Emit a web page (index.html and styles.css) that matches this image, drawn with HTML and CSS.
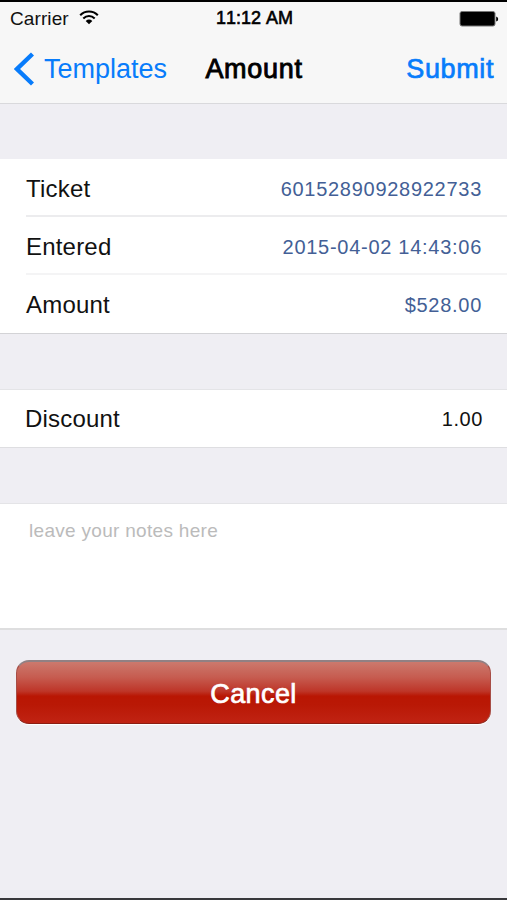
FILE: index.html
```html
<!DOCTYPE html>
<html lang="en">
<head>
    <meta charset="UTF-8">
    <meta name="viewport" content="width=device-width, initial-scale=1.0">
    <title>Amount</title>
    <link rel="stylesheet" href="styles.css">
</head>
<body>
    <div class="header">
        <div class="status-bar">
            <div class="carrier">
                <span>Carrier</span>
                <svg class="wifi" width="20" height="15" viewBox="0 0 20 15">
                    <path d="M1.2 5.2 C6 .3 14 .3 18.8 5.2" fill="none" stroke="#000" stroke-width="2.1"/>
                    <path d="M4.3 8.4 C7.6 5.2 12.4 5.2 15.7 8.4" fill="none" stroke="#000" stroke-width="2.1"/>
                    <path d="M6.7 10.9 Q10 8.2 13.3 10.9 L10 14.3 Z" fill="#000"/>
                </svg>
            </div>
            <div class="clock">11:12 AM</div>
            <svg class="battery" width="40" height="16" viewBox="0 0 40 16">
                <rect x="1" y=".5" width="35" height="14.5" rx="2" fill="#000" stroke="#777"/>
                <path d="M37.2 5.5 Q39.2 6 39.2 8 T37.2 10.5 Z" fill="#000"/>
            </svg>
        </div>
        <div class="nav-bar">
            <a class="back">
                <svg width="20" height="34" viewBox="0 0 20 34">
                    <path d="M18.5 2 L3 17 L18.5 32" fill="none" stroke="#087cfb" stroke-width="4.4"/>
                </svg>
                <span>Templates</span>
            </a>
            <h1>Amount</h1>
            <a class="submit">Submit</a>
        </div>
    </div>

    <div class="group details">
        <div class="row">
            <span>Ticket</span>
            <span class="value">60152890928922733</span>
        </div>
        <div class="row">
            <span>Entered</span>
            <span class="value">2015-04-02 14:43:06</span>
        </div>
        <div class="row">
            <span>Amount</span>
            <span class="value">$528.00</span>
        </div>
    </div>

    <div class="group discount">
        <span>Discount</span>
        <span class="discount-value">1.00</span>
    </div>

    <div class="group notes">leave your notes here</div>

    <button class="cancel-button">Cancel</button>
</body>
</html>
```
FILE: styles.css
```css
* {
    box-sizing: border-box;
}

body {
    font-family: "Liberation Sans", Arial, sans-serif;
    margin: 0;
    height: 900px;
    overflow: hidden;
    background-color: #efeef3;
    color: #111;
    border-top: 2px solid #000;
    border-bottom: 2px solid #38383b;
}

.header {
    height: 102px;
    background-color: #f7f7f7;
    border-bottom: 1px solid #d9d9dc;
}

.status-bar {
    display: grid;
    grid-template-columns: 1fr auto 1fr;
    align-items: center;
    height: 33px;
    padding: 0 8px 0 10px;
}

.carrier {
    display: flex;
    align-items: center;
    gap: 10px;
    font-size: 19px;
    letter-spacing: 0.1px;
}

.wifi {
    margin-top: -3px;
}

.clock {
    font-size: 18px;
    font-kerning: none;
    color: #000;
    -webkit-text-stroke: 0.6px #000;
}

.battery {
    justify-self: end;
}

.nav-bar {
    display: grid;
    grid-template-columns: 1fr auto 1fr;
    align-items: center;
    height: 68px;
    padding: 0 13px 0 14px;
    font-size: 27px;
    color: #087cfb;
}

.back {
    display: flex;
    align-items: center;
    gap: 10px;
}

h1 {
    margin: 0;
    font-size: 27px;
    font-weight: normal;
    letter-spacing: 0.7px;
    color: #000;
    -webkit-text-stroke: 0.9px #000;
}

.submit {
    justify-self: end;
    letter-spacing: 0.6px;
    -webkit-text-stroke: 0.7px #087cfb;
}

.group {
    background-color: #fff;
    font-size: 24px;
    letter-spacing: 0.2px;
}

.details {
    margin-top: 55px;
    padding-left: 26px;
    border-bottom: 1px solid #d3d3d6;
}

.row {
    display: flex;
    align-items: center;
    justify-content: space-between;
    height: 58px;
    padding: 3px 25px 0 0;
    border-bottom: 2px solid #ececee;
}

.row:nth-child(2) {
    border-bottom-color: #f4f4f5;
}

.row:last-child {
    padding-top: 2px;
    border-bottom: none;
}

.value {
    font-size: 20px;
    letter-spacing: 0.72px;
    color: #435f96;
    padding-top: 1px;
}

.discount {
    display: flex;
    align-items: center;
    justify-content: space-between;
    height: 59px;
    margin-top: 55px;
    padding: 0 24px 0 25px;
    border-top: 1px solid #e4e4e7;
    border-bottom: 1px solid #dedee1;
}

.discount-value {
    font-size: 20px;
    letter-spacing: 0.6px;
    padding-top: 2px;
}

.notes {
    height: 127px;
    margin-top: 55px;
    padding: 16px 29px;
    border-top: 1px solid #e4e4e7;
    border-bottom: 2px solid #dededf;
    font-size: 19px;
    letter-spacing: 0.3px;
    color: #bbb;
}

.cancel-button {
    display: block;
    width: 475px;
    height: 64px;
    margin: 30px 0 0 16px;
    padding: 3px 0 0;
    border: 1px solid #a74d45;
    border-top: 2px solid #918083;
    border-bottom-color: #8c1d12;
    border-radius: 13px;
    background: linear-gradient(#cc796d 0%, #c65c50 25%, #be3528 48%, #b91603 56%, #b91805 70%, #c02313 100%);
    box-shadow: 0 1px 1px #fff;
    font-family: inherit;
    font-size: 27px;
    letter-spacing: 0.4px;
    color: #fff;
    -webkit-text-stroke: 0.7px #fff;
}
```
